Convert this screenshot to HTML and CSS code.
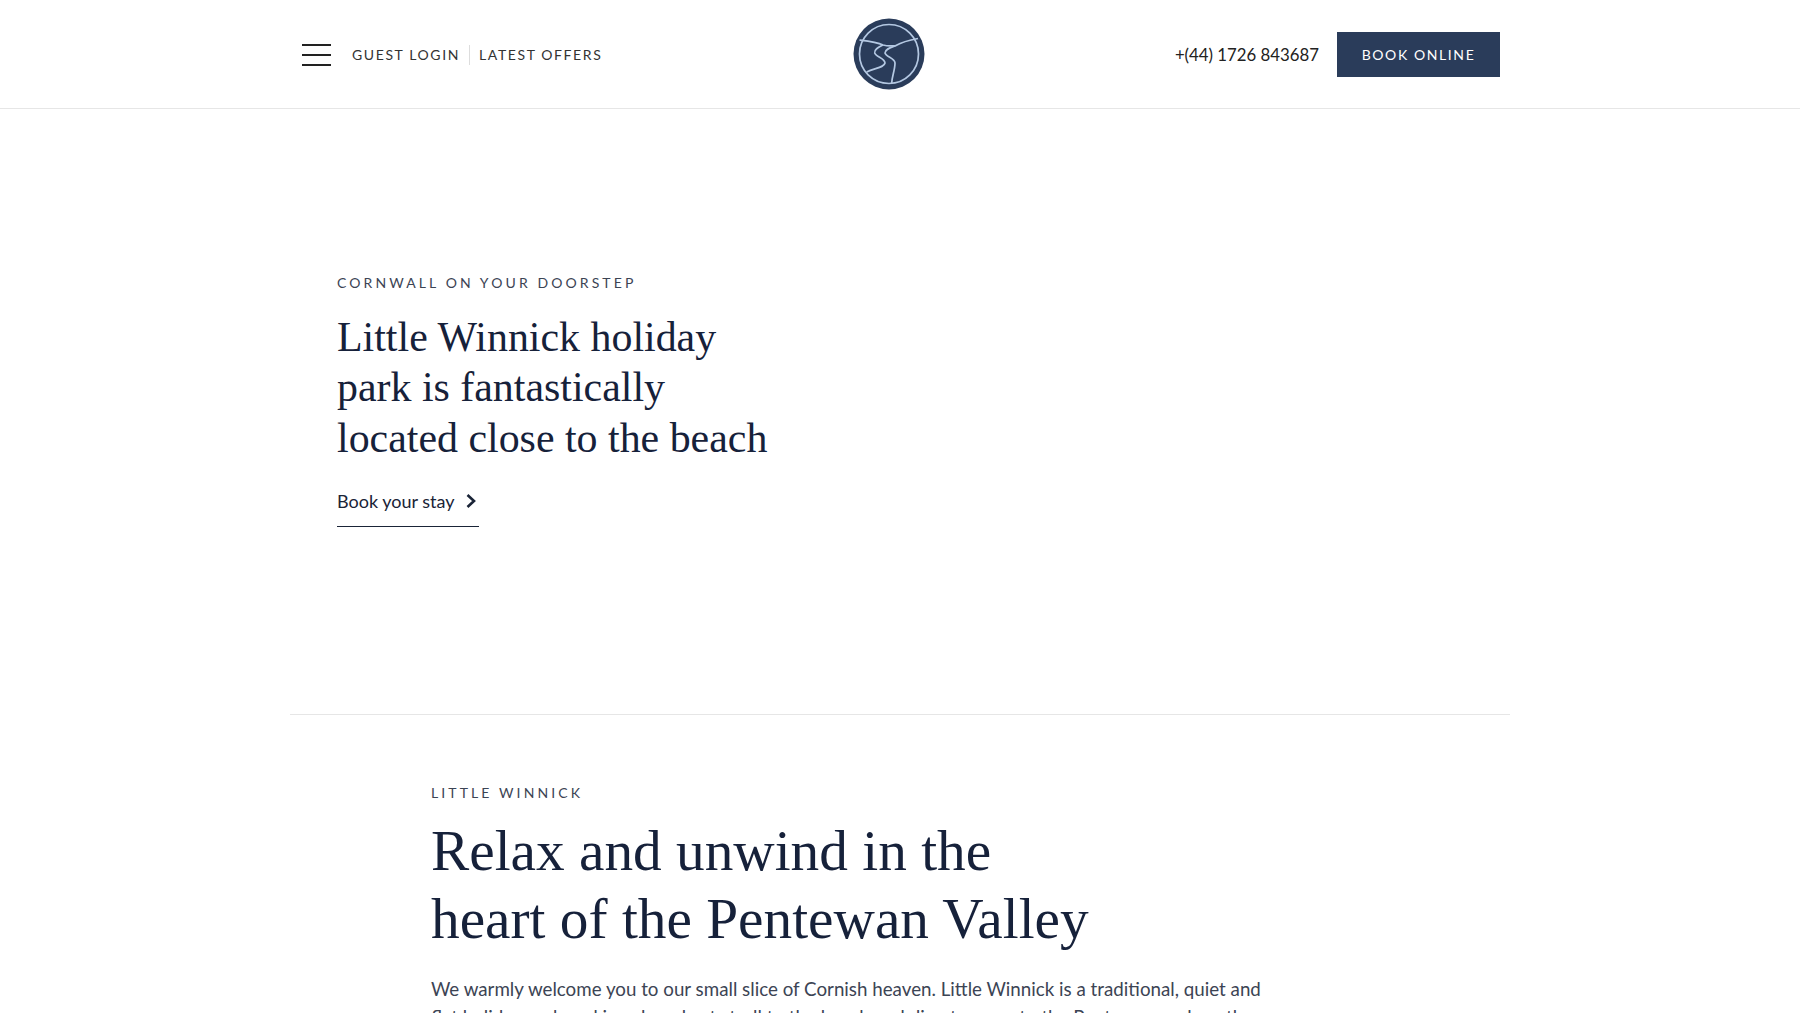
FILE: index.html
```html
<!DOCTYPE html>
<html lang="en">
<head>
    <meta charset="UTF-8">
    <meta name="viewport" content="width=device-width, initial-scale=1.0">
    <title>Little Winnick</title>
    <link rel="stylesheet" href="styles.css">
</head>
<body>
    <header class="site-header">
        <div class="header-inner">
            <div class="header-left">
                <button class="menu-toggle" aria-label="Menu">
                    <span></span><span></span><span></span>
                </button>
                <nav class="top-links">
                    <a href="#">Guest Login</a>
                    <a href="#">Latest Offers</a>
                </nav>
            </div>

            <a href="#" class="logo" aria-label="Little Winnick">
                <svg viewBox="0 0 72 72" width="72" height="72">
                    <circle cx="36" cy="36" r="35.5" fill="#2a3c5a"/>
                    <g fill="none" stroke="#b4c8e2" stroke-width="1.7">
                        <circle cx="36" cy="36" r="29.5"/>
                        <path d="M6.5 22 C15 23 24 24 30 27 C34 28 39 28 43 27.5 C49 24 57 22 65 20.5"/>
                        <path d="M30 27 C26 29 21 31 21.7 35 C23 39 32 40 32 45 C31 50 21 50 13.7 54"/>
                        <path d="M43 27.5 C38 29.5 32 31 32 35 C33 39 42 40 42 45 C42 52 39 58 38.7 65"/>
                    </g>
                </svg>
            </a>

            <div class="header-right">
                <a href="#" class="phone">+(44) 1726 843687</a>
                <a href="#" class="btn-book">Book Online</a>
            </div>
        </div>
    </header>

    <main class="container">
        <section class="hero">
            <p class="eyebrow">Cornwall on your doorstep</p>
            <h2>Little Winnick holiday<br>park is fantastically<br>located close to the beach</h2>
            <a href="#" class="link-arrow">
                Book your stay
                <svg viewBox="0 0 12 16" width="12" height="16"><path d="M2.5 2 L9 8 L2.5 14" fill="none" stroke="#1a2437" stroke-width="2.6"/></svg>
            </a>
        </section>

        <section class="intro">
            <p class="eyebrow">Little Winnick</p>
            <h1>Relax and unwind in the<br>heart of the Pentewan Valley</h1>
            <p class="lead">We warmly welcome you to our small slice of Cornish heaven. Little Winnick is a traditional, quiet and flat holiday park and is only a short stroll to the beach and direct access to the Pentewan cycle path and more.</p>
        </section>
    </main>
</body>
</html>
```

FILE: styles.css
```css
html, body {
    height: 1013px;
    overflow: hidden;
}
body {
    margin: 0;
    padding: 0;
    background-color: #fff;
    color: #16213a;
    font-family: 'Lato', 'Liberation Sans', sans-serif;
}
a {
    color: inherit;
    text-decoration: none;
}

/* header */
.site-header {
    height: 108px;
    border-bottom: 1px solid #e6e6e6;
}
.header-inner {
    width: 1220px;
    height: 108px;
    margin: 0 auto;
    padding: 0 10px 0 12px;
    box-sizing: border-box;
    display: flex;
    align-items: center;
    justify-content: space-between;
}
.header-left {
    display: flex;
    align-items: center;
    padding-top: 2px;
}
.menu-toggle {
    width: 29px;
    height: 22px;
    margin-right: 21px;
    padding: 0;
    border: none;
    background: none;
    display: flex;
    flex-direction: column;
    justify-content: space-between;
}
.menu-toggle span {
    display: block;
    height: 2px;
    background-color: #222;
}
.top-links {
    display: flex;
    align-items: center;
}
.top-links a {
    font-size: 14px;
    letter-spacing: 1.6px;
    text-transform: uppercase;
    color: #333;
    line-height: 20px;
}
.top-links a + a {
    margin-left: 9px;
    padding-left: 9px;
    border-left: 1px solid #ddd;
}
.logo {
    display: flex;
}
.header-right {
    display: flex;
    align-items: center;
}
.phone {
    font-size: 16.8px;
    color: #222;
    margin-right: 18px;
    padding-top: 1px;
}
.btn-book {
    width: 163px;
    height: 45px;
    background-color: #2a3c5a;
    color: #fff;
    font-size: 14px;
    letter-spacing: 1.6px;
    text-transform: uppercase;
    display: flex;
    align-items: center;
    justify-content: center;
}

/* main */
.container {
    width: 1220px;
    margin: 0 auto;
}
.eyebrow {
    margin: 0;
    font-size: 14px;
    line-height: 20px;
    letter-spacing: 3.1px;
    text-transform: uppercase;
    color: #3c4454;
}
h1, h2 {
    margin: 0;
    font-family: 'Liberation Serif', serif;
    font-weight: 400;
    color: #16213a;
}
.hero {
    height: 606px;
    box-sizing: border-box;
    padding: 164px 0 0 47px;
    border-bottom: 1px solid #e6e6e6;
}
.hero h2 {
    margin-top: 19px;
    font-size: 41.9px;
    line-height: 50.4px;
}
.link-arrow {
    display: inline-flex;
    align-items: center;
    gap: 10px;
    width: 142px;
    margin-top: 26px;
    padding-bottom: 13px;
    border-bottom: 1px solid #1a2437;
    font-size: 18px;
    line-height: 24px;
    color: #1a2437;
}
.intro {
    padding: 68px 0 0 141px;
}
.intro h1 {
    margin-top: 14px;
    font-size: 57.3px;
    line-height: 68px;
}
.lead {
    width: 840px;
    margin: 22px 0 0;
    font-size: 18.75px;
    line-height: 28px;
    color: #3c4454;
}
```
